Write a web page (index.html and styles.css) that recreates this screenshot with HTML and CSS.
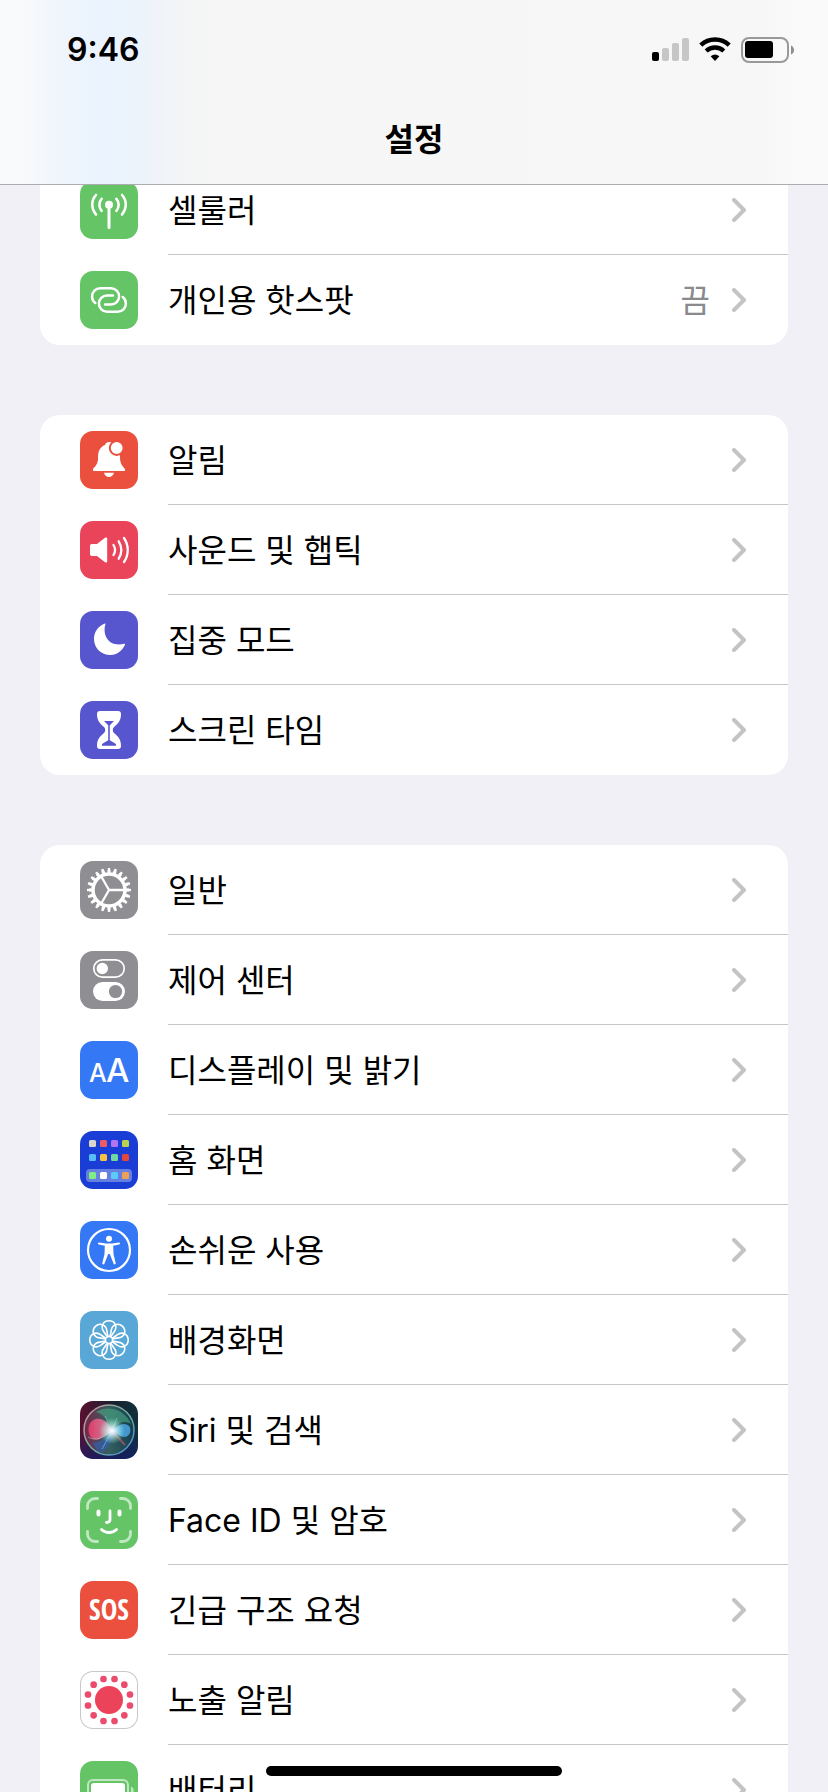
FILE: index.html
```html
<!DOCTYPE html>
<html lang="ko">
<head>
    <meta charset="UTF-8">
    <meta name="viewport" content="width=device-width, initial-scale=1.0">
    <title>설정</title>
    <link rel="stylesheet" href="styles.css">
</head>
<body>
    <svg class="defs" width="0" height="0" aria-hidden="true">
        <symbol id="chevron" viewBox="0 0 14 24">
            <path d="M2 2l10 10L2 22" fill="none" stroke="#c4c4c6" stroke-width="4" stroke-linecap="round" stroke-linejoin="round"/>
        </symbol>
    </svg>

    <header class="header">
        <div class="status">
            <span class="time">9:46</span>
            <div class="status-icons">
                <svg width="37" height="26" viewBox="0 0 37 26">
                    <rect x="0" y="15" width="7" height="9" rx="2"/>
                    <g fill="#c6c6c6">
                        <rect x="10" y="11" width="7" height="13" rx="2"/>
                        <rect x="20" y="6" width="7" height="18" rx="2"/>
                        <rect x="30" y="1" width="7" height="23" rx="2"/>
                    </g>
                </svg>
                <svg width="32" height="26" viewBox="0 0 32 26">
                    <path d="M1.8 8.2a20.5 20.5 0 0 1 28.4 0M7.2 14a13 13 0 0 1 17.6 0" fill="none" stroke="#000" stroke-width="4.4"/>
                    <path d="M11.6 19.2a7 7 0 0 1 8.8 0L16 24z"/>
                </svg>
                <svg width="53" height="26" viewBox="0 0 53 26">
                    <rect x="1" y="1" width="46" height="24" rx="7" fill="none" stroke="#999" stroke-width="2"/>
                    <rect x="4" y="4" width="28" height="17" rx="3"/>
                    <path d="M50 8.500q3 1.500 3 4.500t-3 4.500z" fill="#8e8e8e"/>
                </svg>
            </div>
        </div>
        <h1 class="title">설정</h1>
    </header>

    <main class="settings">
        <ul class="group">
            <li><a class="row" href="#">
                <svg class="icon green" viewBox="0 0 58 58">
                    <g fill="none" stroke="#fff" stroke-width="2.6" stroke-linecap="round">
                        <path d="M16 14c-5 5.500-5 13.500 0 19.500M42 14c5 5.500 5 13.500 0 19.500M21.600 17.800c-3 3.400-3 8.400 0 12M36.400 17.800c3 3.400 3 8.400 0 12"/>
                        <path d="M29 25v21.500" stroke-width="3"/>
                    </g>
                    <circle cx="29" cy="23.700" r="4" fill="#fff"/>
                </svg>
                <span class="cell"><span class="label">셀룰러</span><svg class="chevron"><use href="#chevron"/></svg></span>
            </a></li>
            <li><a class="row" href="#">
                <svg class="icon green" viewBox="0 0 58 58">
                    <g fill="none" stroke="#fff" stroke-width="2.5" stroke-linecap="round">
                        <path id="loop" d="M15.300 32c-2.300-1.600-3.200-4-3.200-6.500 0-4.600 3.500-8.200 8.200-8.200H31a8.100 8.100 0 0 1 0 16.200h-6"/>
                        <use href="#loop" transform="rotate(180 29 29)"/>
                    </g>
                </svg>
                <span class="cell"><span class="label">개인용 핫스팟</span><span class="value">끔</span><svg class="chevron"><use href="#chevron"/></svg></span>
            </a></li>
        </ul>

        <ul class="group">
            <li><a class="row" href="#">
                <svg class="icon red" viewBox="0 0 58 58">
                    <path fill="#fff" d="M14 40c-1.300 0-1.500-1.500-.6-2.500 3-3.500 4.600-5 4.600-10.500 0-7 2-11 7-13 .8-2.200 2.200-3 4-3s3 .6 3.600 2c4.500 2 7.400 6 7.400 13 0 6 1.600 8 4.600 11.500.9 1 .7 2.500-.6 2.500zM24 41.800h10c-.5 2.700-2.700 4.200-5 4.200s-4.500-1.500-5-4.200z"/>
                    <circle cx="36.700" cy="17" r="6.900" fill="#fff" stroke="#eb4f3d" stroke-width="2"/>
                </svg>
                <span class="cell"><span class="label">알림</span><svg class="chevron"><use href="#chevron"/></svg></span>
            </a></li>
            <li><a class="row" href="#">
                <svg class="icon pink" viewBox="0 0 58 58">
                    <path fill="#fff" d="M12 23h5l8-6.200c1.200-.8 2.200-.2 2.200 1v22.400c0 1.200-1 1.800-2.200 1L17 35h-5c-1.300 0-2-.7-2-2v-8c0-1.300.7-2 2-2z"/>
                    <path fill="none" stroke="#fff" stroke-width="2.300" stroke-linecap="round" d="M33.500 24c2 3.200 2 6.800 0 10M38.700 20.300c3.300 5.400 3.300 12 0 17.400M44 17c5 7.400 5 16.600 0 24"/>
                </svg>
                <span class="cell"><span class="label">사운드 및 햅틱</span><svg class="chevron"><use href="#chevron"/></svg></span>
            </a></li>
            <li><a class="row" href="#">
                <svg class="icon indigo" viewBox="0 0 58 58">
                    <path fill="#fff" d="M25.500 13C22.500 22.500 27 33.500 39 33.500c2 0 3.600-.3 5.200-.8.700-.2 1 .2.800.9C42.500 40 37 44 30.500 44 21 44 14 37 14 28c0-7 4-12.700 10.500-15.200.8-.3 1.200-.300 1 .2z"/>
                </svg>
                <span class="cell"><span class="label">집중 모드</span><svg class="chevron"><use href="#chevron"/></svg></span>
            </a></li>
            <li><a class="row" href="#">
                <svg class="icon indigo" viewBox="0 0 58 58">
                    <path fill="#fff" d="M20 10h18c2 0 3 1 3 3 0 7-3 9.500-7 13-1.600 1.500-1.600 4.500 0 6 4 3.500 7 6 7 13 0 2-1 3-3 3H20c-2 0-3-1-3-3 0-7 3-9.500 7-13 1.600-1.500 1.600-4.500 0-6-4-3.500-7-6-7-13 0-2 1-3 3-3z"/>
                    <path fill="#5856ce" d="M24 20h10l-4.200 4.200v15L36 43v1.800H22V43l6.200-3.800v-15z"/>
                </svg>
                <span class="cell"><span class="label">스크린 타임</span><svg class="chevron"><use href="#chevron"/></svg></span>
            </a></li>
        </ul>

        <ul class="group">
            <li><a class="row" href="#">
                <svg class="icon gray" viewBox="0 0 58 58">
                    <g fill="none" stroke="#fff">
                        <circle cx="29" cy="29" r="16" stroke-width="3.500"/>
                        <circle cx="29" cy="29" r="18.500" stroke-width="3" pathLength="80" stroke-dasharray="2.200 1.800" stroke-dashoffset="1.100"/>
                        <circle cx="29" cy="29" r="20.500" stroke-width="3" pathLength="80" stroke-dasharray="1.500 2.500" stroke-dashoffset=".75"/>
                        <path stroke-width="2.300" d="M29 29h16M29 29l-8-14M29 29l-8 14"/>
                    </g>
                </svg>
                <span class="cell"><span class="label">일반</span><svg class="chevron"><use href="#chevron"/></svg></span>
            </a></li>
            <li><a class="row" href="#">
                <svg class="icon gray" viewBox="0 0 58 58">
                    <rect x="13.800" y="8.800" width="30.400" height="17.400" rx="8.700" fill="none" stroke="#fff" stroke-width="1.700"/>
                    <circle cx="22.300" cy="17.500" r="5.700" fill="#fff"/>
                    <rect x="13" y="31" width="32" height="19" rx="9.500" fill="#fff"/>
                    <circle cx="35.500" cy="40.500" r="6.600" fill="#8e8e93"/>
                </svg>
                <span class="cell"><span class="label">제어 센터</span><svg class="chevron"><use href="#chevron"/></svg></span>
            </a></li>
            <li><a class="row" href="#">
                <svg class="icon blue" viewBox="0 0 58 58">
                    <text class="glyph" x="9" y="41" font-size="25">A</text>
                    <text class="glyph" x="26" y="41" font-size="33">A</text>
                </svg>
                <span class="cell"><span class="label">디스플레이 및 밝기</span><svg class="chevron"><use href="#chevron"/></svg></span>
            </a></li>
            <li><a class="row" href="#">
                <svg class="icon navy" viewBox="0 0 58 58">
                    <rect x="6" y="38" width="46" height="13" rx="4" fill="#6680e2"/>
                    <rect x="9" y="9" width="7" height="7" rx="1.500" fill="#d9d5cd"/>
                    <rect x="20" y="9" width="7" height="7" rx="1.500" fill="#ec5b66"/>
                    <rect x="31" y="9" width="7" height="7" rx="1.500" fill="#b174f5"/>
                    <rect x="42" y="9" width="7" height="7" rx="1.500" fill="#b9d14f"/>
                    <rect x="9" y="23" width="7" height="7" rx="1.500" fill="#57bdf6"/>
                    <rect x="20" y="23" width="7" height="7" rx="1.500" fill="#f5c344"/>
                    <rect x="31" y="23" width="7" height="7" rx="1.500" fill="#70d7a3"/>
                    <rect x="42" y="23" width="7" height="7" rx="1.500" fill="#e5463a"/>
                    <rect x="9" y="41" width="7" height="7" rx="1.500" fill="#81ee80"/>
                    <rect x="20" y="41" width="7" height="7" rx="1.500" fill="#fff"/>
                    <rect x="31" y="41" width="7" height="7" rx="1.500" fill="#5ccbfb"/>
                    <rect x="42" y="41" width="7" height="7" rx="1.500" fill="#f0a055"/>
                </svg>
                <span class="cell"><span class="label">홈 화면</span><svg class="chevron"><use href="#chevron"/></svg></span>
            </a></li>
            <li><a class="row" href="#">
                <svg class="icon blue" viewBox="0 0 58 58">
                    <circle cx="29" cy="29" r="21" fill="none" stroke="#fff" stroke-width="2.200"/>
                    <circle cx="29" cy="17.700" r="3" fill="#fff"/>
                    <path fill="#fff" d="M19 21.500l7 1h6l7-1c1.300-.1 1.400 1.700.2 2l-6 1.300.3 8.200 2.200 9c.3 1.500-1.700 2-2.200.6L29.800 33h-1.600l-3.700 9.600c-.5 1.400-2.500.9-2.200-.6l2.200-9 .3-8.200-6-1.300c-1.200-.3-1.100-2.100.2-2z"/>
                </svg>
                <span class="cell"><span class="label">손쉬운 사용</span><svg class="chevron"><use href="#chevron"/></svg></span>
            </a></li>
            <li><a class="row" href="#">
                <svg class="icon sky" viewBox="0 0 58 58">
                    <g fill="none" stroke="#fff" stroke-width="1.600">
                        <path id="petal" d="M27.500 26l-3.500-5c-4-5-1-11.200 5-11.200s9 6.200 5 11.200L30.500 26"/>
                        <use href="#petal" transform="rotate(45 29 29)"/>
                        <use href="#petal" transform="rotate(90 29 29)"/>
                        <use href="#petal" transform="rotate(135 29 29)"/>
                        <use href="#petal" transform="rotate(180 29 29)"/>
                        <use href="#petal" transform="rotate(225 29 29)"/>
                        <use href="#petal" transform="rotate(270 29 29)"/>
                        <use href="#petal" transform="rotate(315 29 29)"/>
                        <circle cx="29" cy="29" r="3.600"/>
                    </g>
                </svg>
                <span class="cell"><span class="label">배경화면</span><svg class="chevron"><use href="#chevron"/></svg></span>
            </a></li>
            <li><a class="row" href="#">
                <svg class="icon siri" viewBox="0 0 58 58">
                    <defs>
                        <radialGradient id="glow" cx="32" cy="30" r="13" gradientUnits="userSpaceOnUse">
                            <stop offset="0" stop-color="#fff"/>
                            <stop offset=".25" stop-color="#e8f8ff" stop-opacity=".85"/>
                            <stop offset="1" stop-color="#9fd" stop-opacity="0"/>
                        </radialGradient>
                        <linearGradient id="ring" x1="0" y1="0" x2="1" y2="1">
                            <stop offset="0" stop-color="#d493a3"/>
                            <stop offset=".5" stop-color="#6fb39c"/>
                            <stop offset="1" stop-color="#4a86d8"/>
                        </linearGradient>
                        <linearGradient id="orb" x1="0" y1="0" x2="1" y2="0">
                            <stop offset="0" stop-color="#7a2448"/>
                            <stop offset=".5" stop-color="#35605f"/>
                            <stop offset="1" stop-color="#123c4c"/>
                        </linearGradient>
                        <linearGradient id="wave" x1="0" y1="0" x2="1" y2="0">
                            <stop offset="0" stop-color="#dc3c66"/>
                            <stop offset="1" stop-color="#e48fae" stop-opacity=".8"/>
                        </linearGradient>
                    </defs>
                    <circle cx="29" cy="29" r="25" fill="url(#orb)" stroke="url(#ring)" stroke-width="1.500"/>
                    <path fill="#4aa886" opacity=".6" d="M16 11c12-8 30-2 35 12-7-4-14-2-19 7-1-9-7-16-16-19z"/>
                    <path fill="#2d5fae" opacity=".7" d="M12 41c6 2 13-3 20-11 3 8-4 17-10 22-4-2-8-6-10-11z"/>
                    <path fill="url(#wave)" d="M32 30c-3-9-10-13-16-12-9 2-10 15-3 20 7 3 12-4 19-8z"/>
                    <path fill="#4aa5e4" opacity=".85" d="M32 30c6-7 13-9 17-5 3 4 1 10-4 11-5 0-8-4-13-6z"/>
                    <path d="M32 30l13 14" stroke="#c65a7b" stroke-width="2" opacity=".6"/>
                    <path d="M8 36c8 5 15 0 24-6M32 30l-7-15M32 30l5-13M32 30l-10 18" fill="none" stroke="#a8dcec" stroke-width="1" opacity=".5"/>
                    <circle cx="32" cy="30" r="13" fill="url(#glow)"/>
                </svg>
                <span class="cell"><span class="label">Siri 및 검색</span><svg class="chevron"><use href="#chevron"/></svg></span>
            </a></li>
            <li><a class="row" href="#">
                <svg class="icon green" viewBox="0 0 58 58">
                    <g fill="none" stroke="#fff" stroke-width="2.800" stroke-linecap="round">
                        <path opacity=".6" d="M17.500 7.500H15A7.500 7.500 0 0 0 7.500 15v2.500M40.500 7.500H43a7.500 7.500 0 0 1 7.500 7.500v2.500M17.500 50.500H15A7.500 7.500 0 0 1 7.500 43v-2.500M40.500 50.500H43a7.500 7.500 0 0 0 7.500-7.500v-2.500"/>
                        <path d="M30 20v8.500c0 2-1 3-3.500 3M21.500 38.500c4 4 11 4 15 0"/>
                        <path stroke-width="4" d="M18.500 20.500v3M39.500 20.500v3"/>
                    </g>
                </svg>
                <span class="cell"><span class="label">Face ID 및 암호</span><svg class="chevron"><use href="#chevron"/></svg></span>
            </a></li>
            <li><a class="row" href="#">
                <svg class="icon red" viewBox="0 0 58 58">
                    <text class="glyph sos" x="29" y="39" text-anchor="middle">SOS</text>
                </svg>
                <span class="cell"><span class="label">긴급 구조 요청</span><svg class="chevron"><use href="#chevron"/></svg></span>
            </a></li>
            <li><a class="row" href="#">
                <svg class="icon outlined" viewBox="0 0 58 58">
                    <circle cx="29" cy="29" r="14" fill="#eb445a"/>
                    <circle cx="29" cy="29" r="21.700" fill="none" stroke="#eb4c6e" stroke-width="6.700" stroke-linecap="round" pathLength="12" stroke-dasharray="0 1" stroke-dashoffset=".5"/>
                </svg>
                <span class="cell"><span class="label">노출 알림</span><svg class="chevron"><use href="#chevron"/></svg></span>
            </a></li>
            <li><a class="row" href="#">
                <svg class="icon green" viewBox="0 0 58 58">
                    <rect x="8" y="19" width="40" height="21" rx="5" fill="none" stroke="#fff" stroke-width="2" opacity=".6"/>
                    <rect x="11" y="22" width="34" height="15" rx="3" fill="#fff"/>
                    <path fill="#fff" opacity=".6" d="M51 25.500c3.500 1.500 3.500 6.500 0 8z"/>
                </svg>
                <span class="cell"><span class="label">배터리</span><svg class="chevron"><use href="#chevron"/></svg></span>
            </a></li>
        </ul>
    </main>

    <div class="home-bar"></div>
</body>
</html>
```
FILE: styles.css
```css
* { box-sizing: border-box; }
body { margin: 0; height: 100vh; overflow: hidden; background: #f1f0f6; color: #000; font-family: Inter, "Noto Sans CJK KR", sans-serif; font-size: 32px; line-height: 40px; }
.defs { position: absolute; }

.header { position: relative; z-index: 1; border-bottom: 1px solid #adadaf; background: linear-gradient(90deg, #f9fafb 0, #f7f9fb 30px, #f0f5fc 60px, #eaf3fe 95px, #ebf3fd 125px, #eff3f9 155px, #f4f5f6 185px, #f6f6f6 220px, #f7f7f7 92%, #fafafa 97%); }
.status { display: flex; align-items: center; justify-content: space-between; height: 99px; padding: 0 34px 0 67px; }
.time { font-weight: 600; }
.status-icons { display: flex; gap: 10px; }
.title { margin: 0; padding: 21px 0 24px; font-size: 32px; line-height: 40px; font-weight: 600; text-align: center; }

/* the first group is scrolled partly under the header */
.settings { display: flex; flex-direction: column; gap: 70px; margin-top: -20px; padding: 0 40px; }
.group { margin: 0; padding: 0; list-style: none; background: #fff; border-radius: 20px; overflow: hidden; }
.row { display: flex; align-items: center; gap: 30px; height: 90px; padding-left: 40px; color: inherit; text-decoration: none; }
.icon { flex: none; width: 58px; height: 58px; border-radius: 13px; }
.cell { flex: 1; display: flex; align-items: center; align-self: stretch; padding-right: 42px; border-bottom: 1px solid #c6c6c8; }
li:last-child .cell { border-bottom-color: transparent; }
.label, .value { padding-top: 2px; }
.label { flex: 1; }
.value { margin-right: 22px; color: #8a8a8e; }
.chevron { flex: none; width: 14px; height: 24px; }

.green { background: #65c466; }
.red { background: #eb4f3d; }
.pink { background: #ea445a; }
.indigo { background: #5856ce; }
.gray { background: #8e8e93; }
.blue { background: #3478f6; }
.navy { background: #1a3dd6; }
.sky { background: #59a7d7; }
.siri { background: linear-gradient(0deg, rgba(20, 30, 110, 0.7), transparent 50%), linear-gradient(90deg, #5a1030, #1c2030 55%, #10303c); }
.outlined { background: #fff; box-shadow: inset 0 0 0 1px #c8c8c8; }
.glyph { fill: #fff; font-family: Inter, sans-serif; font-weight: 500; }
.sos { font-family: "Liberation Sans Narrow", "Open Sans Condensed", "DejaVu Sans Condensed", sans-serif; font-size: 28px; font-weight: 700; }

.home-bar { position: fixed; z-index: 2; bottom: 16px; left: 50%; width: 296px; height: 10px; margin-left: -148px; border-radius: 5px; background: #000; }
```
